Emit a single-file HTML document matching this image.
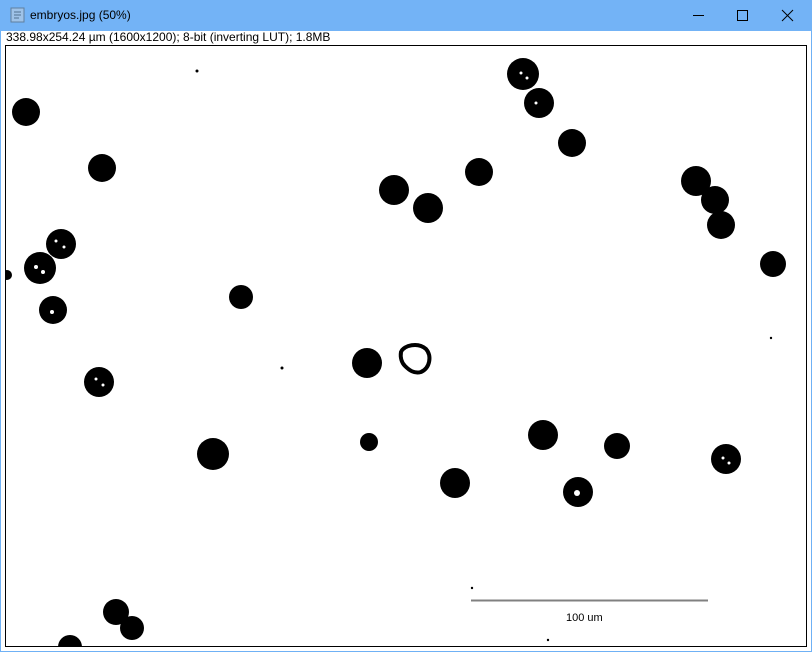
<!DOCTYPE html>
<html><head><meta charset="utf-8"><style>
html,body{margin:0;padding:0;width:812px;height:652px;overflow:hidden;background:#fff;font-family:"Liberation Sans",Arial,sans-serif}
.win{position:absolute;left:0;top:0;width:812px;height:652px;background:#6fb1f5}
.title{position:absolute;left:0;top:0;width:812px;height:31px;background:#73b3f6}
.title .t{position:absolute;left:30px;top:8px;font-size:12px;color:#000}
.body{position:absolute;left:1px;top:31px;width:810px;height:620px;background:#fff}
.info{position:absolute;left:6px;top:30px;font-size:12px;color:#000;line-height:14px}
svg.img{position:absolute;left:5px;top:45px}
</style></head><body>
<div class="win">
<div class="title">
<svg style="position:absolute;left:10px;top:7px" width="15" height="16"><rect x="1" y="1" width="13" height="14" fill="#9fc3e8" stroke="#5f7f9f"/><line x1="4" y1="5" x2="11" y2="5" stroke="#50708f"/><line x1="4" y1="8" x2="11" y2="8" stroke="#50708f"/><line x1="4" y1="11" x2="9" y2="11" stroke="#50708f"/></svg>
<div class="t">embryos.jpg (50%)</div>
<svg style="position:absolute;left:690px;top:8px" width="110" height="16">
<line x1="3" y1="7.5" x2="14" y2="7.5" stroke="#000" stroke-width="1"/>
<rect x="47.5" y="2.5" width="10" height="10" fill="none" stroke="#000"/>
<line x1="92" y1="2" x2="103" y2="13" stroke="#000"/><line x1="103" y1="2" x2="92" y2="13" stroke="#000"/>
</svg>
</div>
<div class="body"></div>
<div class="info">338.98x254.24 µm (1600x1200); 8-bit (inverting LUT); 1.8MB</div>
<svg class="img" width="802" height="602" viewBox="5 45 802 602">
<rect x="5.5" y="45.5" width="801" height="601" fill="#fff" stroke="#000"/>
<g fill="#000">
<circle cx="26" cy="112" r="14"/><circle cx="102" cy="168" r="14"/><circle cx="61" cy="244" r="15"/><circle cx="40" cy="268" r="16"/><circle cx="53" cy="310" r="14"/><circle cx="7" cy="275" r="5"/><circle cx="99" cy="382" r="15"/><circle cx="241" cy="297" r="12"/><circle cx="213" cy="454" r="16"/><circle cx="369" cy="442" r="9"/><circle cx="367" cy="363" r="15"/><circle cx="394" cy="190" r="15"/><circle cx="428" cy="208" r="15"/><circle cx="479" cy="172" r="14"/><circle cx="523" cy="74" r="16"/><circle cx="539" cy="103" r="15"/><circle cx="572" cy="143" r="14"/><circle cx="696" cy="181" r="15"/><circle cx="715" cy="200" r="14"/><circle cx="721" cy="225" r="14"/><circle cx="773" cy="264" r="13"/><circle cx="543" cy="435" r="15"/><circle cx="617" cy="446" r="13"/><circle cx="726" cy="459" r="15"/><circle cx="455" cy="483" r="15"/><circle cx="578" cy="492" r="15"/><circle cx="116" cy="612" r="13"/><circle cx="132" cy="628" r="12"/><circle cx="70" cy="647" r="12"/>
<circle cx="197" cy="71" r="1.5"/><circle cx="282" cy="368" r="1.5"/><circle cx="472" cy="588" r="1.2"/><circle cx="548" cy="640" r="1.2"/><circle cx="771" cy="338" r="1.2"/>
</g>
<g fill="#fff">
<circle cx="56" cy="241" r="1.5"/><circle cx="64" cy="247" r="1.5"/><circle cx="36" cy="267" r="2"/><circle cx="43" cy="272" r="2"/><circle cx="52" cy="312" r="2"/><circle cx="96" cy="379" r="1.5"/><circle cx="103" cy="385" r="1.5"/><circle cx="577" cy="493" r="3"/><circle cx="723" cy="458" r="1.5"/><circle cx="729" cy="463" r="1.5"/><circle cx="536" cy="103" r="1.5"/><circle cx="521" cy="73" r="1.5"/><circle cx="527" cy="78" r="1.5"/>
</g>
<path d="M401 352 C404 345 418 342 426 349 C432 356 430 368 421 372 C414 374 409 370 405 366 C402 363 400 358 401 352 Z" fill="#fff" stroke="#000" stroke-width="4"/>
<line x1="471" y1="600.5" x2="708" y2="600.5" stroke="#808080" stroke-width="2"/>
<text x="566" y="621" font-size="11" font-family="Liberation Sans, sans-serif">100 um</text>
</svg>
</div>
</body></html>
